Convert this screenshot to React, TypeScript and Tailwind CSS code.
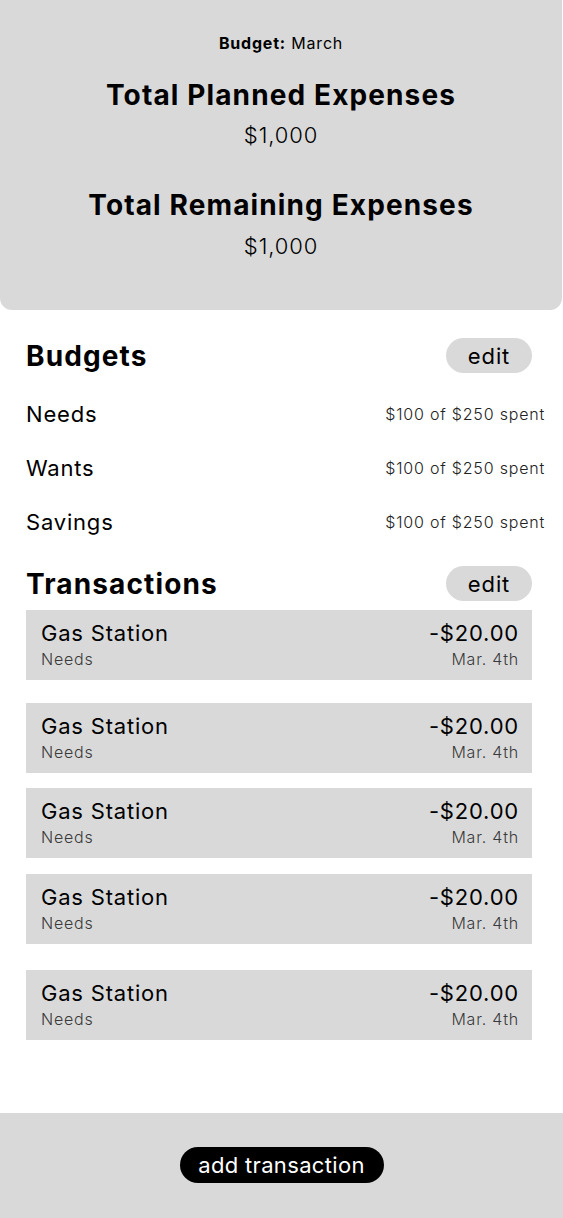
import React from 'react'

const budgets = [
    { name: 'Needs', spent: '$100', total: '$250' },
    { name: 'Wants', spent: '$100', total: '$250' },
    { name: 'Savings', spent: '$100', total: '$250' },
]

// spacing above each card, taken from the mockup (it is uneven)
const transactions = [
    { id: 1, gap: 'mt-[9px]' },
    { id: 2, gap: 'mt-[23px]' },
    { id: 3, gap: 'mt-[15px]' },
    { id: 4, gap: 'mt-[16px]' },
    { id: 5, gap: 'mt-[26px]' },
]

function EditButton() {
    return (
        <button className="h-[35px] w-[86px] rounded-full bg-[#d9d9d9] text-[22px] leading-none tracking-[0.04em] text-black">
            edit
        </button>
    )
}

function TransactionCard({ gap }: { gap: string }) {
    return (
        <div className={`${gap} flex h-[70px] items-start justify-between bg-[#d9d9d9] pl-[15px] pr-[13px] pt-[10px]`}>
            <div className="flex flex-col">
                <span className="text-[22px] leading-[26px] text-black">Gas Station</span>
                <span className="mt-[3px] text-[16px] font-light leading-[20px] text-[#3a3a3a]">Needs</span>
            </div>
            <div className="flex flex-col items-end">
                <span className="text-[22px] leading-[26px] text-black">-$20.00</span>
                <span className="mt-[3px] text-[16px] font-light leading-[20px] text-[#3a3a3a]">Mar. 4th</span>
            </div>
        </div>
    )
}

export default function App() {
    return (
        <main
            className="flex min-h-[1218px] w-[563px] flex-col bg-white tracking-[0.05em] text-black"
            style={{ fontFamily: 'Inter, "Noto Sans", sans-serif' }}
        >
            {/* Summary card */}
            <section className="flex h-[310px] w-[562px] flex-col items-center rounded-b-[12px] bg-[#d9d9d9] pt-[31px] text-center">
                <p className="text-[16px] leading-[24px]">
                    <span className="font-bold">Budget:</span> March
                </p>
                <h1 className="mt-[23px] text-[28px] font-bold leading-[34px] tracking-[0.04em]">Total Planned Expenses</h1>
                <p className="mt-[9px] text-[22px] font-light leading-[28px] tracking-[0.04em]">$1,000</p>
                <h1 className="mt-[39px] text-[28px] font-bold leading-[34px] tracking-[0.04em]">Total Remaining Expenses</h1>
                <p className="mt-[10px] text-[22px] font-light leading-[28px] tracking-[0.04em]">$1,000</p>
            </section>

            {/* Budgets */}
            <section className="mt-[28px] pl-[26px]">
                <div className="flex items-center justify-between pr-[31px]">
                    <h2 className="text-[28px] font-bold leading-[34px] tracking-[0.04em]">Budgets</h2>
                    <EditButton />
                </div>
                <div className="mt-[14px] flex flex-col pr-[18px]">
                    {budgets.map(b => (
                        <div key={b.name} className="flex h-[54px] items-center justify-between">
                            <span className="text-[22px] leading-[28px]">{b.name}</span>
                            <span className="text-[16px] font-light leading-[20px] text-[#222]">
                                {b.spent} of {b.total} spent
                            </span>
                        </div>
                    ))}
                </div>
            </section>

            {/* Transactions */}
            <section className="mt-[17px] pl-[26px] pr-[31px]">
                <div className="flex items-center justify-between">
                    <h2 className="text-[28px] font-bold leading-[34px] tracking-[0.04em]">Transactions</h2>
                    <EditButton />
                </div>
                <div className="flex flex-col">
                    {transactions.map(t => (
                        <TransactionCard key={t.id} gap={t.gap} />
                    ))}
                </div>
            </section>

            <div className="flex-1" />

            {/* Footer */}
            <footer className="flex h-[105px] justify-center bg-[#d9d9d9] pt-[34px]">
                <button className="h-[36px] w-[204px] rounded-full bg-black text-[22px] leading-none tracking-[0.015em] text-white">
                    add transaction
                </button>
            </footer>
        </main>
    )
}
